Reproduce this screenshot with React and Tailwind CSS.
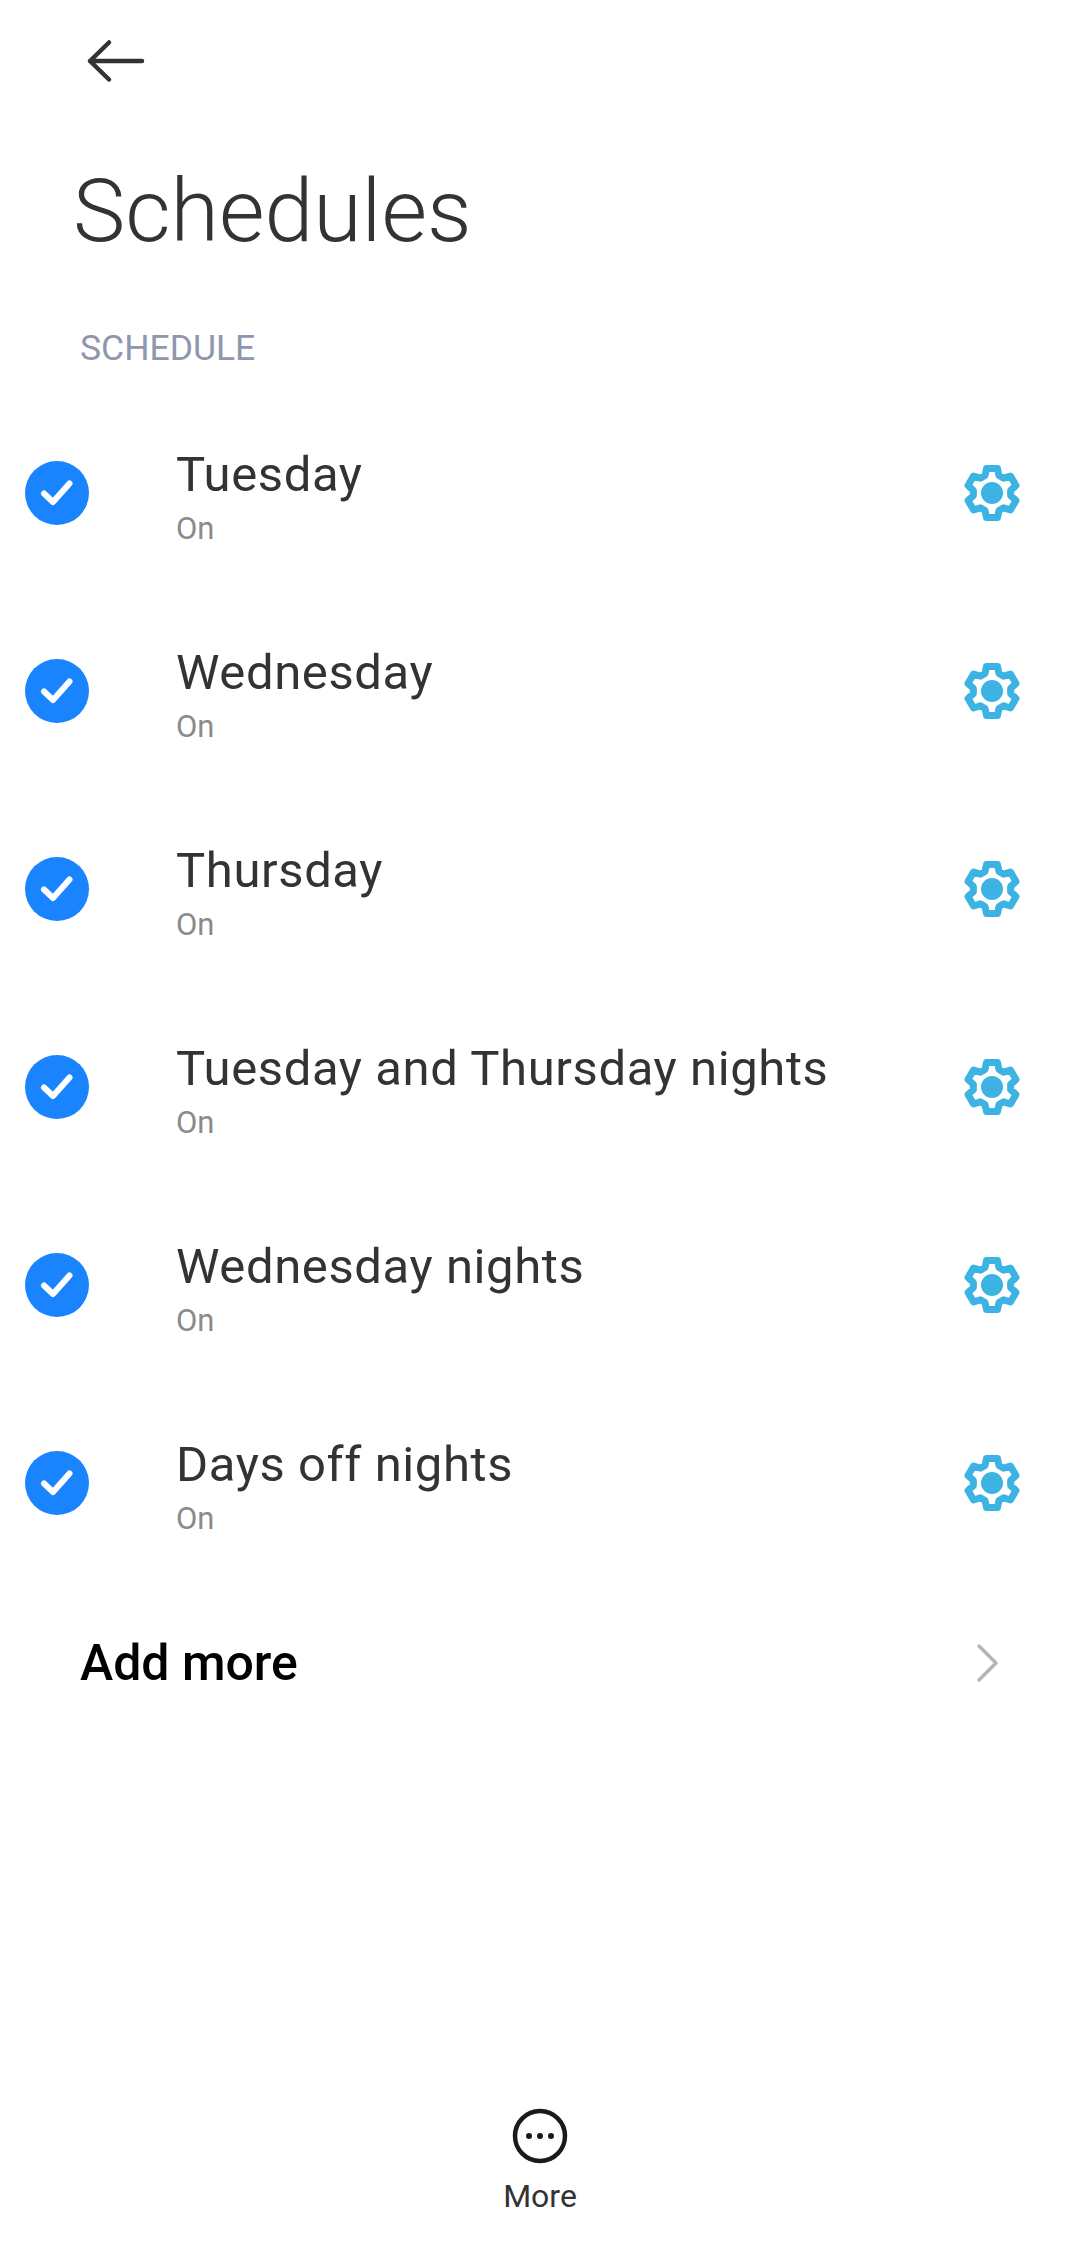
import React from 'react';

const schedules = [
  'Tuesday',
  'Wednesday',
  'Thursday',
  'Tuesday and Thursday nights',
  'Wednesday nights',
  'Days off nights',
];

const CheckIcon = () => (
  <div className="flex h-16 w-16 shrink-0 items-center justify-center rounded-full bg-[#1a84ff]">
    <svg width="34" height="34" viewBox="0 0 34 34" fill="none">
      <path d="M4 17.5 L13 26 L29.5 7.5" stroke="#fff" strokeWidth="6" strokeLinecap="round" strokeLinejoin="round" />
    </svg>
  </div>
);

const gearPath = (() => {
  const pts = [];
  for (let i = 0; i < 6; i++) {
    const a = ((-90 + i * 60) * Math.PI) / 180;
    const ca = Math.cos(a);
    const sa = Math.sin(a);
    const add = (r, t) => pts.push(`${(r * ca - t * sa).toFixed(2)} ${(r * sa + t * ca).toFixed(2)}`);
    add(17.5, -7);
    add(24.5, -5.5);
    add(24.5, 5.5);
    add(17.5, 7);
  }
  return `M${pts.join(' L')} Z`;
})();

const GearIcon = () => (
  <svg width="60" height="60" viewBox="-30 -30 60 60" fill="none">
    <path d={gearPath} stroke="#3cb3e3" strokeWidth="7" strokeLinejoin="round" />
    <circle cx="0" cy="0" r="11" fill="#3cb3e3" />
  </svg>
);

const ScheduleRow = ({ name }) => (
  <div className="flex h-[198px] items-center pl-[25px] pr-[58px]">
    <CheckIcon />
    <div className="ml-[87px] min-w-0 flex-1 pt-[10px]">
      <p className="text-[49px] leading-[54px] tracking-[0.6px] text-[#333]">{name}</p>
      <p className="mt-[7px] text-[31px] leading-[40px] text-[#8a8a8a]">On</p>
    </div>
    <GearIcon />
  </div>
);

export default function App() {
  return (
    <div className="flex h-[2255px] w-[1080px] flex-col bg-white font-['Roboto',sans-serif]">
      <div className="flex h-[122px] items-center pl-[85px]">
        <svg width="64" height="44" viewBox="0 0 64 44" fill="none">
          <path d="M57 22 H5 M24 3.5 L5 22 L24 40.5" stroke="#333" strokeWidth="4.5" strokeLinecap="round" strokeLinejoin="round" />
        </svg>
      </div>

      <h1 className="mt-[33px] pl-[73px] text-[88px] font-light leading-[112px] text-[#333]">Schedules</h1>

      <p className="mt-[59px] pl-[80px] text-[35.5px] leading-[44px] text-[#8f96ae]">SCHEDULE</p>

      <div className="mt-[24px]">
        {schedules.map((name) => (
          <ScheduleRow key={name} name={name} />
        ))}
      </div>

      <div className="flex h-[162px] items-center justify-between pl-[80px] pr-[80px]">
        <span className="text-[50px] font-medium text-black">Add more</span>
        <svg width="26" height="44" viewBox="0 0 26 44" fill="none">
          <path d="M5 5 L22 22 L5 39" stroke="#b5b5b5" strokeWidth="3.5" strokeLinecap="round" strokeLinejoin="round" />
        </svg>
      </div>

      <div className="mt-auto flex flex-col items-center pb-[39px]">
        <svg width="58" height="58" viewBox="0 0 58 58" fill="none">
          <circle cx="29" cy="29" r="25" stroke="#1a1a1a" strokeWidth="4.5" />
          <circle cx="18" cy="29" r="3" fill="#1a1a1a" />
          <circle cx="29" cy="29" r="3" fill="#1a1a1a" />
          <circle cx="40" cy="29" r="3" fill="#1a1a1a" />
        </svg>
        <span className="mt-[11px] text-[32px] leading-[40px] text-[#333]">More</span>
      </div>
    </div>
  );
}
